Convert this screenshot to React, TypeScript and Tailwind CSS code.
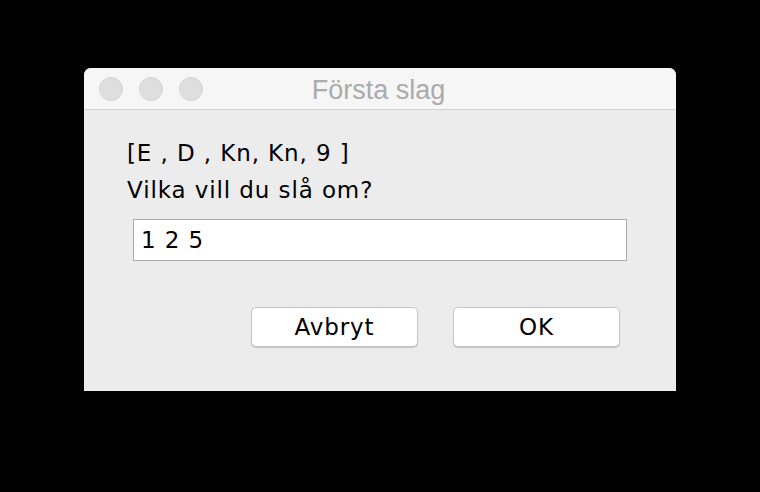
export default function App() {
  return (
    <main className="flex h-[492px] w-[760px] items-start bg-black pl-[84px] pt-[68px]">
      <section className="flex h-[323px] w-[592px] flex-col overflow-hidden rounded-t-[7px] bg-[#ececec]">
        <header className="relative flex h-[42px] shrink-0 items-center border-b border-[#d1d1d1] bg-[#f6f6f6] pl-[15px]">
          <div className="flex gap-[16px]">
            <span className="h-[24px] w-[24px] rounded-full border border-[#d3d3d3] bg-[#dedede]" />
            <span className="h-[24px] w-[24px] rounded-full border border-[#d3d3d3] bg-[#dedede]" />
            <span className="h-[24px] w-[24px] rounded-full border border-[#d3d3d3] bg-[#dedede]" />
          </div>
          <h1 className="absolute inset-0 flex items-center justify-center pr-[3px] pt-[3px] font-['Liberation_Sans',sans-serif] text-[27px] text-[#ababab]">
            Första slag
          </h1>
        </header>

        <div className="flex flex-col pl-[43px] pt-[25px] font-['DejaVu_Sans',sans-serif] text-[23px] tracking-[0.9px] text-black">
          <p className="leading-[37px]">[E , D , Kn, Kn, 9 ]</p>
          <p className="leading-[37px]">Vilka vill du slå om?</p>
          <div className="ml-[6px] mt-[10px] flex h-[42px] w-[494px] items-center border border-[#ababab] bg-white px-[7px]">
            1 2 5
          </div>
          <div className="ml-[124px] mt-[46px] flex gap-[35px]">
            <button className="h-[40px] w-[167px] rounded-[5px] border border-[#c6c6c6] bg-white tracking-[0.9px] text-black shadow-[0_1px_1px_rgba(0,0,0,0.18)]">
              Avbryt
            </button>
            <button className="h-[40px] w-[167px] rounded-[5px] border border-[#c6c6c6] bg-white tracking-[0.9px] text-black shadow-[0_1px_1px_rgba(0,0,0,0.18)]">
              OK
            </button>
          </div>
        </div>
      </section>
    </main>
  );
}
